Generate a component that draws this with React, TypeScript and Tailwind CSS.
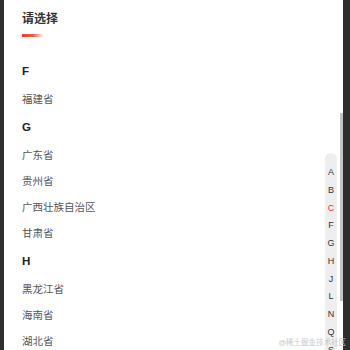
const groups = [
  { letter: "F", items: ["福建省"] },
  { letter: "G", items: ["广东省", "贵州省", "广西壮族自治区", "甘肃省"] },
  { letter: "H", items: ["黑龙江省", "海南省", "湖北省"] },
];

const indexLetters = ["A", "B", "C", "F", "G", "H", "J", "L", "N", "Q", "S"];

export default function App() {
  return (
    <div
      className="relative flex h-[350px] w-[350px] overflow-hidden bg-[#2e2e2e]"
      style={{ fontFamily: '"Liberation Sans", "Noto Sans CJK SC", sans-serif' }}
    >
      <div className="relative ml-[4px] h-full w-[339px] overflow-hidden bg-white">
        <div className="pl-[18px] pt-[11px]">
          <h2 className="text-[12px] leading-[17px] font-bold text-[#333]">请选择</h2>
          <div className="mt-[6px] h-[2.5px] w-[22px] bg-gradient-to-r from-[#e8392c] via-[#ec5b4f] to-[#e8392c]/0" />
        </div>

        <div className="mt-[20px] pl-[18px]">
          {groups.map((g) => (
            <div key={g.letter}>
              <div className="flex h-[30px] items-center text-[11.5px] font-bold text-[#222]">
                {g.letter}
              </div>
              {g.items.map((name) => (
                <div key={name} className="flex h-[26px] items-center text-[10.5px] text-[#555]">
                  {name}
                </div>
              ))}
            </div>
          ))}
        </div>

        {/* letter index */}
        <div className="absolute left-[321px] top-[153px] w-[12px] rounded-t-full bg-[#eeeef1] pt-[11px]">
          {indexLetters.map((l) => (
            <div
              key={l}
              className={
                "flex h-[17.75px] items-center justify-center text-[9px] " +
                (l === "C" ? "text-[#e8392c]" : "text-[#333]")
              }
            >
              {l}
            </div>
          ))}
        </div>

        {/* scrollbar thumb */}
        <div className="absolute right-0 top-[113px] h-[188px] w-[3px] bg-[#c4c4c4]" />
      </div>

      <div className="absolute right-[4px] bottom-[4px] text-[7.5px] leading-none text-[#c8c8c8]">
        @稀土掘金技术社区
      </div>
    </div>
  );
}
